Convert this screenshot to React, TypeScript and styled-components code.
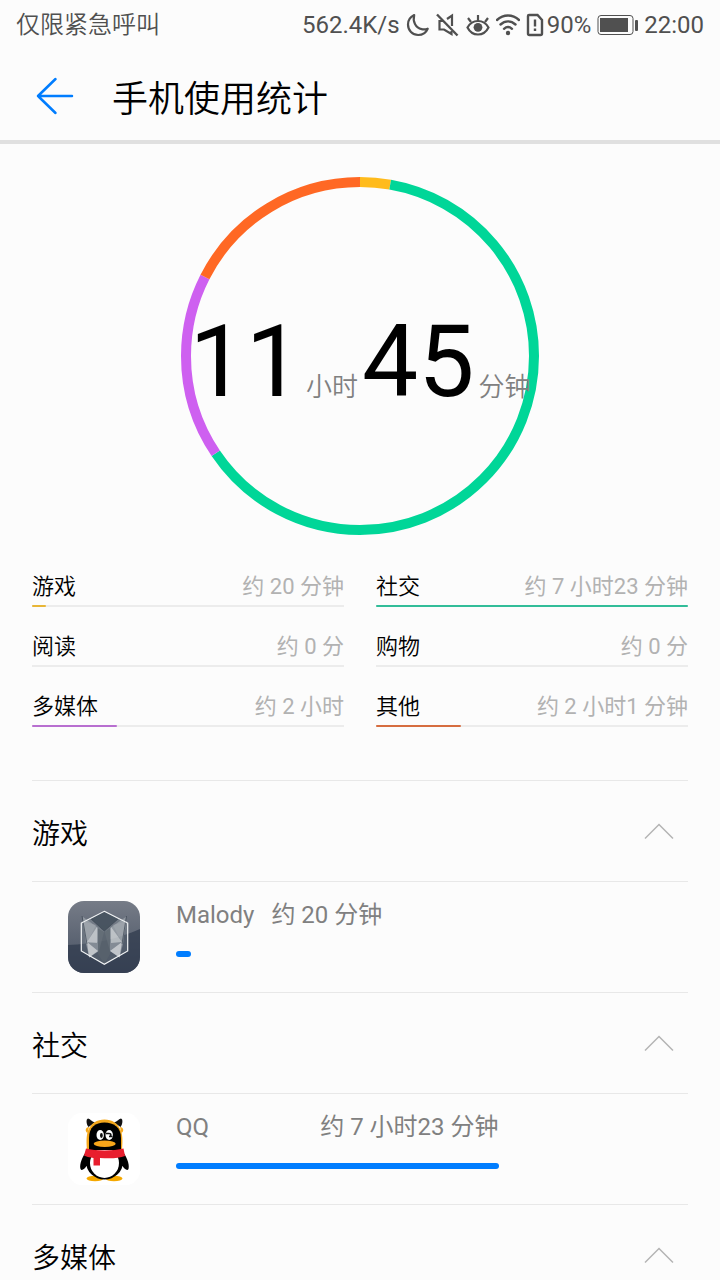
import * as React from 'react'
import styled, { createGlobalStyle } from 'styled-components'

type Category = {
  name: string
  time: string
  minutes: number
  ring: string
  bar: string
}

type AppUsage = {
  name: string
  time: string
  minutes: number
  icon: React.ReactNode
}

type Group = {
  name: string
  apps: AppUsage[]
}

// Chinese-only labels use the lighter 350 weight, text with digits stays at 400
const GlobalStyle = createGlobalStyle`
  * {
    box-sizing: border-box;
  }

  body {
    margin: 0;
    background: #fcfcfc;
    color: #000;
    font-family: Roboto, 'Noto Sans CJK SC', sans-serif;
    font-weight: 400;
  }
`

const Screen = styled.div`
  display: flex;
  flex-direction: column;
  height: 100vh;
  overflow: hidden;
`

const StatusBar = styled.div`
  display: flex;
  flex-shrink: 0;
  justify-content: space-between;
  align-items: center;
  height: 50px;
  padding: 0 16px;
  color: #505050;
  font-size: 24px;
  line-height: 32px;
  white-space: nowrap;
`

const Carrier = styled.span`
  font-weight: 350;
`

const StatusIcons = styled.div`
  display: flex;
  align-items: center;
  gap: 6px;

  svg {
    display: block;
  }
`

const Battery = styled.div`
  display: flex;
  align-items: center;
  gap: 6px;
`

const SimLevel = styled.div`
  display: flex;
  align-items: center;
  gap: 3px;
`

const Header = styled.header`
  display: flex;
  flex-shrink: 0;
  align-items: center;
  height: 94px;
  padding: 2px 32px 0;
  gap: 36px;
  border-bottom: 4px solid #e0e0e0;
`

const BackButton = styled.button`
  display: flex;
  padding: 0;
  border: 0;
  background: none;
  cursor: pointer;
`

const Title = styled.h1`
  margin: 0;
  padding-top: 8px;
  font-size: 36px;
  font-weight: 350;
  line-height: 48px;
`

const Content = styled.main`
  flex: 1;
  min-height: 0;
  padding: 32px 32px 0;
  overflow-y: auto;
  scrollbar-width: none;
`

const RingBox = styled.div`
  display: grid;
  justify-content: center;
  align-items: center;

  > * {
    grid-area: 1 / 1;
  }
`

const Total = styled.p`
  display: flex;
  justify-content: center;
  align-items: baseline;
  gap: 4px;
  margin: 0;
  padding-top: 36px;
  line-height: 120px;
`

const TotalNumber = styled.span`
  font-size: 100px;
`

const TotalUnit = styled.span`
  color: #808080;
  font-size: 26px;
  font-weight: 350;
`

const Legend = styled.ul`
  display: grid;
  grid-template-columns: 1fr 1fr;
  gap: 24px 32px;
  margin: 35px 0 53px;
  padding: 0;
  list-style: none;
`

const LegendItem = styled.li`
  display: flex;
  flex-direction: column;
  gap: 2px;
`

const LegendText = styled.div`
  display: flex;
  justify-content: space-between;
  font-size: 22px;
  line-height: 32px;
`

const LegendName = styled.span`
  font-weight: 350;
`

const LegendTime = styled.span`
  color: #b2b2b2;
`

const LegendTrack = styled.div`
  height: 2px;
  background: #ececec;
`

const LegendBar = styled.div<{ $color: string }>`
  height: 100%;
  border-radius: 1px;
  background: ${({ $color }) => $color};
`

const Section = styled.section`
  border-top: 1px solid #e8e8e8;
`

const SectionHead = styled.h2`
  margin: 0;
  font-size: 28px;
  font-weight: 350;
`

const Toggle = styled.button`
  display: flex;
  justify-content: space-between;
  align-items: center;
  width: 100%;
  height: 100px;
  padding: 2px 14px 0 0;
  border: 0;
  background: none;
  color: inherit;
  font: inherit;
  cursor: pointer;
`

const AppRow = styled.div`
  display: flex;
  gap: 36px;
  height: 111px;
  padding: 19px 0 0 36px;
  border-top: 1px solid #e8e8e8;

  > svg {
    flex-shrink: 0;
  }
`

const AppInfo = styled.div`
  flex: 1;
`

const AppText = styled.div`
  display: flex;
  justify-content: space-between;
  gap: 17px;
  width: fit-content;
  color: #808080;
  font-size: 24px;
  line-height: 28px;
  white-space: nowrap;
`

const AppBar = styled.div`
  height: 6px;
  margin-top: 22px;
  border-radius: 3px;
  background: #007dff;
`

const MalodyIcon = () => (
  <svg width="72" height="72" viewBox="0 0 72 72">
    <defs>
      <linearGradient id="malody" x1="0" y1="0" x2="0" y2="1">
        <stop offset="0" stopColor="#767c87" />
        <stop offset="1" stopColor="#465062" />
      </linearGradient>
    </defs>
    <rect width="72" height="72" rx="16" fill="url(#malody)" />
    <path d="M0 44C25 43 50 38 72 28v28a16 16 0 0 1-16 16H16A16 16 0 0 1 0 56z" fill="#303b4d" opacity=".75" />
    <path d="M36.3 10.3 59.7 22v28L36.3 63.3 13.3 50V22z" fill="#8b969c" fillOpacity=".3" />
    <path d="M36.3 10.3 23 18l13.3 12L50 18z" fill="#3e4b57" opacity=".8" />
    <path d="M14.7 15.7 36 31 31 50l-9.700 6.500L18 43z" fill="#bfc5ca" opacity=".45" />
    <path d="M58 15.700 36.600 31 42 50l9.500 6.500L55 43z" fill="#bfc5ca" opacity=".45" />
    <path d="M14 20 28 24 19 42z" fill="#a6acb2" opacity=".5" />
    <path d="M59 20 45 24l9 18z" fill="#a6acb2" opacity=".5" />
    <path d="M29 26v16l-10-1zM43 26v16l11-1z" fill="#fff" opacity=".4" />
    <path d="M19 41 30 50l-9 6.500zM54 41 42 50l9.500 6.500z" fill="#fff" opacity=".5" />
    <path d="M30 27v26l6.300 10.300L42 53V27l-5.700 4z" fill="#59636d" opacity=".8" />
    <path d="m14 15 5 28M58.500 15 54 43M23 18l13.300 12L50 18" fill="none" stroke="#3c4653" strokeWidth=".7" />
    <path d="M36.3 10.3 59.7 22v28L36.3 63.3 13.3 50V22z" fill="none" stroke="#f2f4f5" strokeWidth="1.200" />
  </svg>
)

const QQIcon = () => (
  <svg width="72" height="72" viewBox="0 0 72 72">
    <rect width="72" height="72" rx="14" fill="#fff" />
    <ellipse cx="27" cy="65.500" rx="8.500" ry="2.800" fill="#f5a800" />
    <ellipse cx="46" cy="65.500" rx="8.500" ry="2.800" fill="#f5a800" />
    <path d="M19 38c-4 4-8 13-6.500 18 1.300 2.500 4.300-.5 6-3h36c1.700 2.500 4.700 5.500 6 3 1.500-5-2.500-14-6.500-18z" fill="#000" />
    <ellipse cx="36.500" cy="49" rx="18.500" ry="17.500" fill="#000" />
    <ellipse cx="36.500" cy="50" rx="14.500" ry="15" fill="#fff" />
    <path d="M20.500 14c-2.500-3-2.500-8-.5-8.500 1.800 0 3.500 3 7 4zM52.500 14c2.500-3 2.500-8 .5-8.500-1.800 0-3.500 3-7 4z" fill="#111" />
    <path d="M19 37c-.5-6-1-14 1-19C23 10 29 6.500 36.500 6.500S50 10 53 18c2 5 1.500 13 1 19z" fill="#f5a81c" />
    <path d="M21 14c-3.500.5-4.500 4-1.500 6zM52 14c3.500.5 4.500 4 1.500 6z" fill="#f5a81c" />
    <path d="M21 37V25C21 14 27.500 9.500 36.500 9.500S53 14 53 25v12z" fill="#000" />
    <ellipse cx="32.200" cy="22" rx="3.700" ry="5" fill="#fff" />
    <ellipse cx="33.400" cy="22.500" rx="1.400" ry="2.400" fill="#111" />
    <ellipse cx="41.200" cy="22" rx="3.700" ry="5" fill="#fff" />
    <path d="M38 20.500h3c2.500 0 2.500 3 0 3h3.500" fill="none" stroke="#111" strokeWidth="1.500" />
    <ellipse cx="36.700" cy="30.800" rx="11" ry="3.200" fill="#f9a61a" />
    <path d="M18 35.500c9 2.500 28 2.500 37.500 0L57 43c-6 2.500-15 2.500-25 2v7.500h-6.500V45c-4-.5-7.500-1.500-9.500-2.500z" fill="#e81e2e" />
  </svg>
)

const categories: Category[] = [
  { name: '游戏', time: '约 20 分钟', minutes: 20, ring: '#ffbb1c', bar: '#e8b636' },
  { name: '社交', time: '约 7 小时23 分钟', minutes: 443, ring: '#00d698', bar: '#32bd99' },
  { name: '阅读', time: '约 0 分', minutes: 0, ring: '#007dff', bar: '#007dff' },
  { name: '购物', time: '约 0 分', minutes: 0, ring: '#ff4c6a', bar: '#ff4c6a' },
  { name: '多媒体', time: '约 2 小时', minutes: 120, ring: '#ce60f0', bar: '#b86fd0' },
  { name: '其他', time: '约 2 小时1 分钟', minutes: 121, ring: '#ff6824', bar: '#d66d40' }
]

const groups: Group[] = [
  { name: '游戏', apps: [{ name: 'Malody', time: '约 20 分钟', minutes: 20, icon: <MalodyIcon /> }] },
  { name: '社交', apps: [{ name: 'QQ', time: '约 7 小时23 分钟', minutes: 443, icon: <QQIcon /> }] },
  { name: '多媒体', apps: [] }
]

const longest = Math.max(...categories.map((c) => c.minutes))
const sum = categories.reduce((acc, c) => acc + c.minutes, 0)

// The longest app fills 63% of its row
const appWidth = (minutes: number) => `${(minutes / longest) * 63}%`

// Whole degrees only, the last category takes what is left of the circle
const Ring = () => {
  let start = 0
  return (
    <svg width="360" height="360" viewBox="0 0 360 360">
      <g fill="none" strokeWidth="10" transform="rotate(-90 180 180)">
        {categories.map((c, i) => {
          const offset = start
          const last = i === categories.length - 1
          const degrees = last ? 360 - start : Math.floor((c.minutes / sum) * 360)
          start += degrees
          if (!degrees) return null
          return (
            <circle
              key={c.name}
              cx="180"
              cy="180"
              r="174"
              pathLength={360}
              stroke={c.ring}
              strokeDasharray={`${degrees} ${360 - degrees}`}
              strokeDashoffset={-offset}
            />
          )
        })}
      </g>
    </svg>
  )
}

const MoonIcon = () => (
  <svg width="24" height="24" viewBox="0 0 24 24" fill="none" stroke="#505050" strokeWidth="2.200" strokeLinejoin="round">
    <path d="M8.200 2C4 4 2 7.500 2 11.500 2 17.500 6.500 22 12.200 22c4.300 0 7.800-2.300 9.500-6.300-2 .7-4 .9-6 .5C9.500 15 6.500 8.500 8.200 2z" />
  </svg>
)

const MuteIcon = () => (
  <svg width="24" height="24" viewBox="0 0 24 24" fill="none" stroke="#505050" strokeWidth="2.200">
    <path d="M1 1.500 21.500 22.500" strokeWidth="2.400" />
    <path d="M7 8H3.500v8.500H8l7.500 4.500v-3M11 6l5-3.500V13" />
  </svg>
)

const EyeIcon = () => (
  <svg width="24" height="24" viewBox="0 0 24 24" fill="none" stroke="#505050" strokeWidth="2.200">
    <path d="M1.500 14.500C4 10 7.500 8 12 8s8 2 10.500 6.500C20 19.500 16.500 21.500 12 21.500S4 19.500 1.500 14.500z" />
    <circle cx="12" cy="14.300" r="4.400" fill="#505050" stroke="none" />
    <path d="M12 2v6M2 5l3 4M22 5l-3 4" />
  </svg>
)

const WifiIcon = () => (
  <svg width="24" height="24" viewBox="0 0 24 24" fill="none" stroke="#505050" strokeWidth="2.400" strokeLinecap="round">
    <path d="M1 7c6.500-6 15.500-6 22 0M4.500 11.500c4.500-4.200 10.500-4.200 15 0M8 15.800c2.500-2.300 5.500-2.300 8 0" />
    <circle cx="12" cy="20" r="2.200" fill="#505050" stroke="none" />
  </svg>
)

const SimIcon = () => (
  <svg width="18" height="24" viewBox="0 0 18 24" fill="none" stroke="#505050" strokeWidth="2.400">
    <path d="M3 2h8.500L16 7v13.500a1.500 1.500 0 0 1-1.500 1.500h-11A1.500 1.500 0 0 1 2 20.500V3a1 1 0 0 1 1-1z" />
    <path d="M9 6.500v7M9 15.500v2.500" />
  </svg>
)

const BatteryIcon = () => (
  <svg width="41" height="24" viewBox="0 0 41 24">
    <rect x="1" y="2.500" width="35" height="19" rx="3" fill="none" stroke="#505050" />
    <rect x="3" y="5" width="28" height="14" fill="#505050" />
    <rect x="38" y="7" width="3" height="11" rx="1" fill="#505050" />
  </svg>
)

const App: React.FC = () => {
  const [closed, setClosed] = React.useState<string[]>([])

  const toggle = (name: string) =>
    setClosed(closed.includes(name) ? closed.filter((n) => n !== name) : [...closed, name])

  return (
    <Screen>
      <GlobalStyle />
      <StatusBar>
        <Carrier>仅限紧急呼叫</Carrier>
        <StatusIcons>
          <span>562.4K/s</span>
          <MoonIcon />
          <MuteIcon />
          <EyeIcon />
          <WifiIcon />
          <SimLevel>
            <SimIcon />
            <span>90%</span>
          </SimLevel>
          <Battery>
            <BatteryIcon />
            <span>22:00</span>
          </Battery>
        </StatusIcons>
      </StatusBar>
      <Header>
        <BackButton aria-label="返回">
          <svg width="44" height="44" viewBox="0 0 44 44" fill="none" stroke="#007dff" strokeWidth="2.500" strokeLinecap="round" strokeLinejoin="round">
            <path d="M23.500 5 6 22l17.500 17M6 22h34" />
          </svg>
        </BackButton>
        <Title>手机使用统计</Title>
      </Header>
      <Content>
        <RingBox>
          <Ring />
          <Total>
            <TotalNumber>11</TotalNumber>
            <TotalUnit>小时</TotalUnit>
            <TotalNumber>45</TotalNumber>
            <TotalUnit>分钟</TotalUnit>
          </Total>
        </RingBox>
        <Legend>
          {categories.map((c) => (
            <LegendItem key={c.name}>
              <LegendText>
                <LegendName>{c.name}</LegendName>
                <LegendTime>{c.time}</LegendTime>
              </LegendText>
              <LegendTrack>
                <LegendBar $color={c.bar} style={{ width: `${(c.minutes / longest) * 100}%` }} />
              </LegendTrack>
            </LegendItem>
          ))}
        </Legend>
        {groups.map((group) => (
          <Section key={group.name}>
            <SectionHead>
              <Toggle aria-expanded={!closed.includes(group.name)} onClick={() => toggle(group.name)}>
                {group.name}
                <svg width="30" height="18" viewBox="0 0 30 18" fill="none" stroke="#b4b4b4" strokeWidth="1.500">
                  <path d="M1 15.500 15 1.500l14 14" />
                </svg>
              </Toggle>
            </SectionHead>
            {!closed.includes(group.name) &&
              group.apps.map((app) => (
                <AppRow key={app.name}>
                  {app.icon}
                  <AppInfo>
                    <AppText style={{ minWidth: appWidth(app.minutes) }}>
                      <span>{app.name}</span>
                      <span>{app.time}</span>
                    </AppText>
                    <AppBar style={{ width: appWidth(app.minutes) }} />
                  </AppInfo>
                </AppRow>
              ))}
          </Section>
        ))}
      </Content>
    </Screen>
  )
}

export default App
